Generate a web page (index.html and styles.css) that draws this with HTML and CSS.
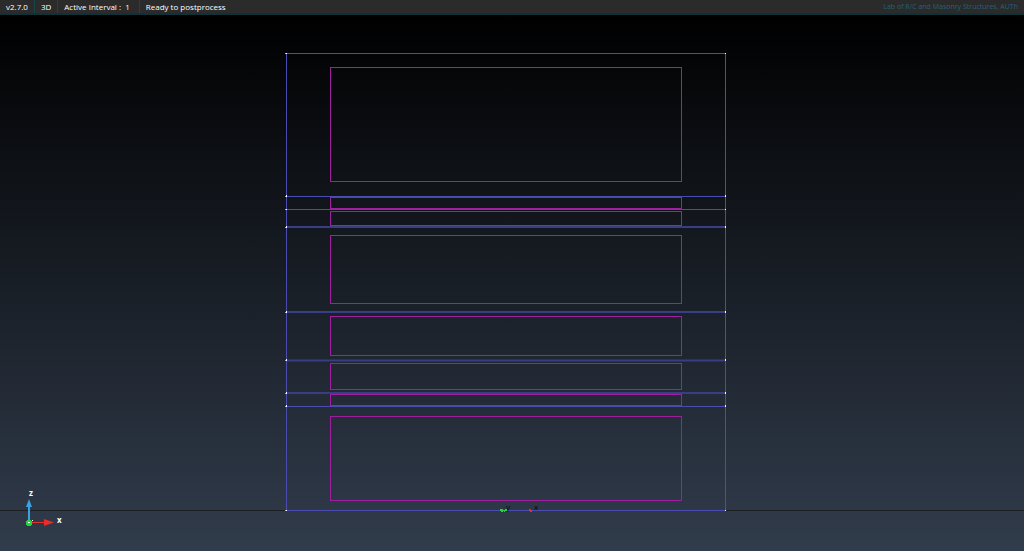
FILE: index.html
```
<!DOCTYPE html>
<html lang="en">
<head>
    <meta charset="utf-8">
    <title>Postprocess</title>
    <link rel="stylesheet" href="styles.css">
</head>
<body>
    <header class="status-bar">
        <span class="item version">v2.7.0</span>
        <span class="item mode">3D</span>
        <span class="item interval">Active Interval :&nbsp; 1</span>
        <span class="item status">Ready to postprocess</span>
        <span class="credit">Lab of R/C and Masonry Structures, AUTh</span>
    </header>
    <main class="viewport">
        <svg class="scene" viewBox="0 15 1024 536" role="img" aria-label="Model view">
            <!-- ground line -->
            <path class="ground" d="M-2000 510.500H3000"/>

            <!-- layers -->
            <g class="section">
                <rect x="330.500" y="67.500" width="351" height="114"/>
                <rect x="330.500" y="197.500" width="351" height="11"/>
                <rect x="330.500" y="211.500" width="351" height="14"/>
                <rect x="330.500" y="235.500" width="351" height="68"/>
                <rect x="330.500" y="316.500" width="351" height="39"/>
                <rect x="330.500" y="363.500" width="351" height="26"/>
                <rect x="330.500" y="394.500" width="351" height="11"/>
                <rect x="330.500" y="416.500" width="351" height="84"/>
            </g>
            <g class="edges">
                <path d="M286.500 53.500H725.500V510.500H286.500Z"/>
                <path d="M286 196.500H726M286 209.500H726M286 406.500H726"/>
                <path class="thick" d="M286 227H726M286 312H726M286 360.500H726M286 393H726"/>
            </g>
            <path class="nodes" d="M286 53h1v1h-1zM286 195h1v2h-1zM286 209h1v1h-1zM286 226h1v2h-1zM286 311h1v2h-1zM286 359h1v2h-1zM286 392h1v2h-1zM286 405h1v2h-1zM286 510h1v1h-1zM725 53h1v1h-1zM725 195h1v2h-1zM725 209h1v1h-1zM725 226h1v2h-1zM725 311h1v2h-1zM725 359h1v2h-1zM725 392h1v2h-1zM725 405h1v2h-1zM725 510h1v1h-1z"/>
            <path class="halo" d="M285 53h1v1h-1zM285 196h1v1h-1zM285 209h1v1h-1zM285 227h1v1h-1zM285 312h1v1h-1zM285 360h1v1h-1zM285 393h1v1h-1zM285 406h1v1h-1zM285 510h1v1h-1z"/>

            <!-- origin marks -->
            <path class="green" d="M500 509h3v1h2v-1h2v2h-2v1h-1v-1h-1v1h-2v-1h-1z"/>
            <path class="red" d="M529 509h2v1h1v2h-2v-1h-1z"/>
            <text class="mark" x="506" y="510">y</text>
            <text class="mark" x="534" y="510">x</text>

            <!-- axis triad -->
            <path class="blue" d="M28 522V507H26L29 499L32 507H30V522Z"/>
            <path class="red" d="M30 522H44V519L54 522.500L44 526V523H30Z"/>
            <path class="green" d="M27 520h4v1h1v4h-1v1h-4v-1h-1v-4h1z"/>
            <path class="nodes" d="M28 522h2v1h-2zM32 520h1v1h-1z"/>
            <text class="axis" x="29" y="496">z</text>
            <text class="axis" x="57" y="523">x</text>
        </svg>
    </main>
</body>
</html>
```

FILE: styles.css
```
* { box-sizing: border-box; }
body {
    margin: 0;
    height: 100vh;
    display: flex;
    flex-direction: column;
    overflow: hidden;
    background: #000;
    font-family: "Open Sans", "Noto Sans", sans-serif;
}
.status-bar {
    display: flex;
    flex: none;
    height: 15px;
    background: #2b2b2b;
    border-bottom: 2px solid #0d3339;
    color: #fff;
    font-size: 8px;
    line-height: 14px;
    white-space: nowrap;
}
.item { padding: 0 6px; border-right: 1px solid #14464d; }
.interval { padding-right: 9px; }
.status { border-right: none; }
.credit {
    margin-left: auto;
    padding-right: 6px;
    color: #23627a;
    font-size: 7px;
}
.viewport {
    flex: 1;
    min-height: 0;
    background: linear-gradient(#000, #313c4c);
}
.scene { display: block; width: 100%; height: 100%; }
.ground { stroke: #1d2023; fill: none; }
.section { fill: none; stroke: #a01fa1; }
.edges { fill: none; stroke: #4b4cb2; }
.edges .thick { stroke: #383d84; stroke-width: 2px; }
.nodes { fill: #fff; }
.halo { fill: #a9abc4; }
.green { fill: #23d33f; }
.red { fill: #ea2d2b; }
.blue { fill: #3aa3e6; }
.axis { fill: #fff; font-size: 8px; font-weight: bold; }
.mark { fill: #08090b; font-size: 8px; }
```
